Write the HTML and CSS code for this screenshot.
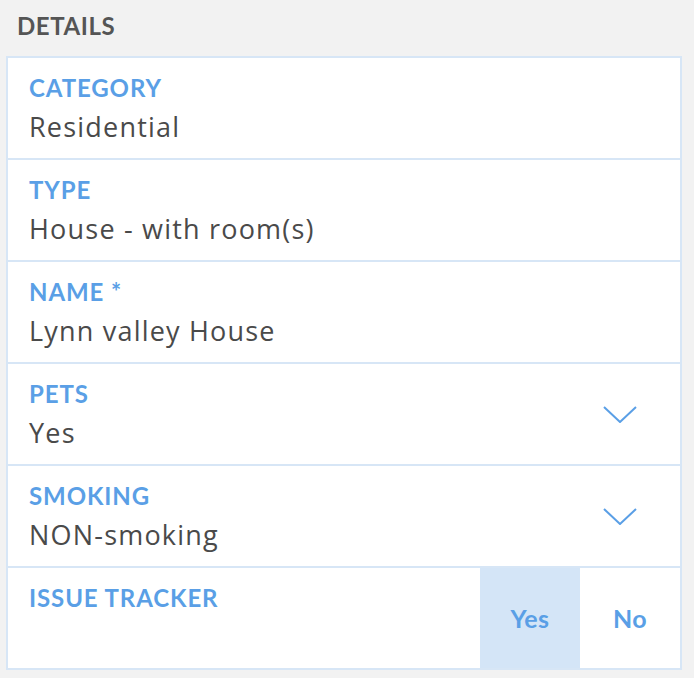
FILE: index.html
```html
<!DOCTYPE html>
<html>
<head>
<meta charset="utf-8">
<link rel="stylesheet" href="styles.css">
</head>
<body>
<div class="page">
  <h2 class="section-title">DETAILS</h2>
  <div class="card">
    <div class="row">
      <div class="field">
        <div class="label">CATEGORY</div>
        <div class="value">Residential</div>
      </div>
    </div>
    <div class="row">
      <div class="field">
        <div class="label">TYPE</div>
        <div class="value">House - with room(s)</div>
      </div>
    </div>
    <div class="row">
      <div class="field">
        <div class="label">NAME *</div>
        <div class="value">Lynn valley House</div>
      </div>
    </div>
    <div class="row">
      <div class="field">
        <div class="label">PETS</div>
        <div class="value">Yes</div>
      </div>
      <svg class="chevron" width="34" height="17" viewBox="0 0 34 17"><path d="M1 1 L17 16 L33 1" fill="none" stroke="#5a9fe6" stroke-width="2"/></svg>
    </div>
    <div class="row">
      <div class="field">
        <div class="label">SMOKING</div>
        <div class="value">NON-smoking</div>
      </div>
      <svg class="chevron" width="34" height="17" viewBox="0 0 34 17"><path d="M1 1 L17 16 L33 1" fill="none" stroke="#5a9fe6" stroke-width="2"/></svg>
    </div>
    <div class="row toggle-row">
      <div class="field">
        <div class="label">ISSUE TRACKER</div>
      </div>
      <div class="toggle">
        <div class="opt opt-active">Yes</div>
        <div class="opt">No</div>
      </div>
    </div>
  </div>
</div>
</body>
</html>
```
FILE: styles.css
```css
html, body {
  margin: 0;
  padding: 0;
  background: #f2f2f2;
}
body {
  font-family: Lato, "Open Sans", sans-serif;
  width: 694px;
  height: 678px;
  overflow: hidden;
}
.page {
  padding: 0 12px 0 6px;
}
.section-title {
  margin: 0;
  height: 56px;
  box-sizing: border-box;
  padding: 12px 0 0 11px;
  font-size: 24px;
  line-height: 28px;
  font-weight: 700;
  letter-spacing: 0.6px;
  color: #555555;
}
.card {
  border: 2px solid #d7e6f6;
  background: #fff;
}
.row {
  height: 100px;
  display: flex;
  align-items: center;
  border-top: 2px solid #d7e6f6;
}
.row:first-child {
  border-top: none;
}
.field {
  flex: 1;
  align-self: stretch;
  padding: 16px 0 0 21px;
}
.label {
  font-size: 24px;
  line-height: 28px;
  font-weight: 700;
  letter-spacing: 0.9px;
  color: #5a9fe6;
}
.value {
  margin-top: 5px;
  font-family: "Open Sans", Lato, sans-serif;
  font-size: 27px;
  line-height: 40px;
  letter-spacing: 1.2px;
  color: #4a4a4a;
}
.chevron {
  margin-right: 43px;
  display: block;
}
.toggle {
  display: flex;
  align-self: stretch;
}
.opt {
  width: 100px;
  display: flex;
  align-items: center;
  justify-content: center;
  font-size: 25px;
  font-weight: 700;
  letter-spacing: 0.5px;
  color: #5a9fe6;
}
.opt-active {
  background: #d4e5f7;
}
```
